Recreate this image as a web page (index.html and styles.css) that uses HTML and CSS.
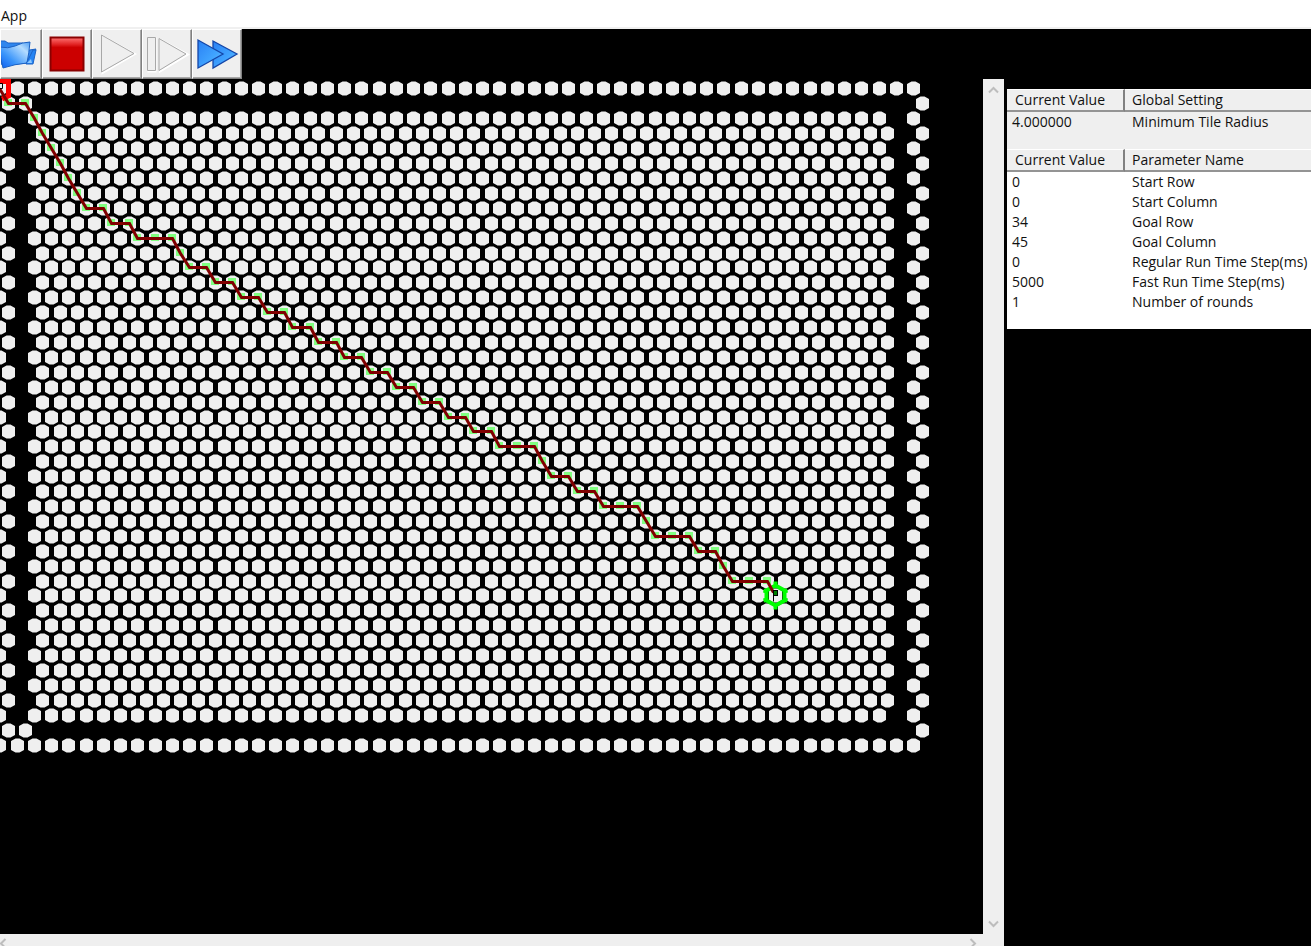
FILE: index.html
```html
<!DOCTYPE html>
<html lang="en">
<head>
<meta charset="utf-8">
<title>App</title>
<link rel="stylesheet" href="styles.css">
</head>
<body>
<div class="window">
  <nav class="menubar"><button class="menu-item" type="button">App</button></nav>
  <div class="toolbar" role="toolbar">
    <button class="tool tool-open" type="button" aria-label="Open">
      <svg width="49" height="48" viewBox="0 0 49 48">
        <defs>
          <linearGradient id="folder" x1="0" y1="1" x2="1" y2="0"><stop offset="0" stop-color="#0a5cf0"/><stop offset=".35" stop-color="#3c96fa"/><stop offset=".75" stop-color="#b4dcff"/><stop offset="1" stop-color="#4a9cf5"/></linearGradient>
        </defs>
        <path d="M4 13 7 11h5l3 2h15v8l13-2-7 14-27 2z" fill="#2f86ee" stroke="#1c62c4"/>
        <path d="M7 17q8 2 15-1 8-4 15-4-1 11-3 21-12 1-24 5-3-9-3-21z" fill="url(#folder)" stroke="#1c62c4"/>
        <path d="M33 34 40 20h3l-3 14z" fill="#2484f4" stroke="#1c62c4"/>
        <path d="m34 33 4-4 1 4z" fill="#8cc8ff"/>
      </svg>
    </button>
    <button class="tool" type="button" aria-label="Stop">
      <svg width="49" height="48" viewBox="0 0 49 48">
        <defs><linearGradient id="stop" x1="0" y1="0" x2="0" y2="1"><stop offset="0" stop-color="#ff7474"/><stop offset=".22" stop-color="#e02020"/><stop offset=".3" stop-color="#cc0000"/><stop offset="1" stop-color="#cc0000"/></linearGradient></defs>
        <rect x="7.500" y="7.500" width="33" height="33" fill="url(#stop)" stroke="#8a0000" stroke-width="2"/>
      </svg>
    </button>
    <button class="tool" type="button" aria-label="Run">
      <svg width="49" height="48" viewBox="0 0 49 48"><path d="M9.500 6v37L42 24z" fill="none" stroke="#fff" stroke-width="2"/><path d="M8.500 5v37L41 23.500z" fill="#efefef" stroke="#a8a8a8"/></svg>
    </button>
    <button class="tool" type="button" aria-label="Step">
      <svg width="49" height="48" viewBox="0 0 49 48"><path d="M12.500 8.500h-7v33h7zM17 9.500v32L45 24.500z" fill="none" stroke="#fff" stroke-width="2"/><path d="M12.500 7.500h-8v33h8zM16 8.500v32L43 24z" fill="#efefef" stroke="#a8a8a8"/></svg>
    </button>
    <button class="tool" type="button" aria-label="Fast run">
      <svg width="49" height="48" viewBox="0 0 49 48">
        <defs><linearGradient id="fast" x1="0" y1="0" x2="1" y2="1"><stop offset="0" stop-color="#2a80f4"/><stop offset=".6" stop-color="#40a4ff"/><stop offset="1" stop-color="#70c4ff"/></linearGradient></defs>
        <g fill="url(#fast)" stroke="#1446a8" stroke-width="1.300"><path d="M20 11v27l24-14z"/><path d="M5 10v28l25-14z"/></g>
      </svg>
    </button>
  </div>
  <main class="workspace">
    <section class="viewport">
      <svg class="board" id="board" width="983" height="855" role="img" aria-label="Tile map with search path"></svg>
      <div class="bar bar-v">
        <button class="arrow" type="button" aria-label="Scroll up"><svg width="11" height="8" viewBox="0 0 11 8"><path d="m1 6.500 4.500-4.500L10 6.500"/></svg></button>
        <button class="arrow" type="button" aria-label="Scroll down"><svg width="11" height="8" viewBox="0 0 11 8"><path d="M1 1.500 5.500 6 10 1.500"/></svg></button>
      </div>
      <div class="bar bar-h">
        <button class="arrow" type="button" aria-label="Scroll left"><svg width="8" height="11" viewBox="0 0 8 11"><path d="M5.500 1 1 5.500 5.500 10"/></svg></button>
        <button class="arrow" type="button" aria-label="Scroll right"><svg width="8" height="11" viewBox="0 0 8 11"><path d="M1.500 1 6 5.500 1.500 10"/></svg></button>
      </div>
    </section>
    <aside class="panel">
      <table class="grid grid-global">
        <thead><tr><th>Current Value</th><th>Global Setting</th></tr></thead>
        <tbody><tr><td>4.000000</td><td>Minimum Tile Radius</td></tr></tbody>
      </table>
      <table class="grid grid-params">
        <thead><tr><th>Current Value</th><th>Parameter Name</th></tr></thead>
        <tbody>
          <tr><td>0</td><td>Start Row</td></tr>
          <tr><td>0</td><td>Start Column</td></tr>
          <tr><td>34</td><td>Goal Row</td></tr>
          <tr><td>45</td><td>Goal Column</td></tr>
          <tr><td>0</td><td>Regular Run Time Step(ms)</td></tr>
          <tr><td>5000</td><td>Fast Run Time Step(ms)</td></tr>
          <tr><td>1</td><td>Number of rounds</td></tr>
        </tbody>
      </table>
    </aside>
  </main>
</div>
<script src="board.js"></script>
</body>
</html>
```
FILE: styles.css
```css
* { box-sizing: border-box; }
body { margin: 0; background: #000; color: #111; font: 14px/20px "Open Sans", "Noto Sans", sans-serif; }
button { font: inherit; color: inherit; margin: 0; padding: 0; border: 0; background: none; }
.window { display: flex; flex-direction: column; height: 100vh; overflow: hidden; }
.menubar { flex: none; height: 29px; background: #fff; border-bottom: 2px solid #f0f0f0; padding: 6px 1px 0; }
.menu-item { display: block; }
.toolbar { flex: none; display: flex; height: 50px; }
.tool { width: 50px; background: #efefef; border: 1px solid; border-color: #fff #808080 #808080 #fff; box-shadow: inset -1px -1px #a8a8a8; overflow: hidden; }
.tool svg { display: block; }
.tool-open { width: 42px; }
.tool-open svg { margin-left: -8px; }
.workspace { flex: 1; min-height: 0; display: grid; grid-template-columns: minmax(0, 1fr) 304px; gap: 3px; }
.viewport { display: grid; grid-template-columns: minmax(0, 1fr) 21px; grid-template-rows: minmax(0, 1fr) 12px; min-height: 0; background: #efefef; }
.board { width: 100%; height: 100%; background: #000; display: block; }
.bar { display: flex; justify-content: space-between; overflow: hidden; }
.bar-v { flex-direction: column; padding: 7px 0 6px; align-items: center; }
.bar-h { grid-column: 1; padding: 4px 6px 0 0; align-items: flex-start; }
.arrow svg { display: block; fill: none; stroke: #bdbdbd; stroke-width: 2; }
.tile { fill: #efefef; }
.visited { fill: #80ff80; }
.route { fill: none; stroke: #800000; stroke-width: 3; }
.start { fill: none; stroke: #f00; stroke-width: 5; }
.goal { fill: none; stroke: #0f0; stroke-width: 4; }
.marker { fill: none; stroke: #000; stroke-width: 1; }
.marker-box { fill: #008000; stroke: #000; stroke-width: 1; }
.panel { padding-top: 10px; }
.grid { width: 100%; border-collapse: separate; border-spacing: 0; table-layout: fixed; white-space: nowrap; }
.grid th { height: 23px; padding: 0 8px; line-height: 20px; text-align: left; font-weight: 400; background: #efefef; border-top: 1px solid #fff; border-bottom: 2px solid #949494; }
.grid th:first-child { width: 118px; border-right: 2px solid #808080; }
.grid td { height: 20px; padding: 0 5px; }
.grid td:last-child { padding-left: 7px; }
.grid th:last-child { padding-left: 7px; }
.grid-global { background: #efefef; border-bottom: 17px solid #efefef; }
.grid-params { background: #fff; border-bottom: 17px solid #fff; }
```
FILE: board.js
```js
const NS = "http://www.w3.org/2000/svg";
const board = document.getElementById("board");
const PITCH = 17.24, ROW = 14.91, TOP = 9.49;
const COLS = 54, ROWS = 45;

// Centers sit on half pixels so that tile edges and the route stay crisp.
const center = (row, col) => [
  Math.floor(col * PITCH + (row % 2) * PITCH / 2 - 0.1) + 0.5,
  Math.round(TOP + row * ROW) + 0.5
];

function add(name, attrs) {
  const el = document.createElementNS(NS, name);
  for (const key in attrs) el.setAttribute(key, attrs[key]);
  board.append(el);
}

function hex(x, y, w, h) {
  return `M${x} ${y - h}L${x + w} ${y - h / 2}V${y + h / 2}L${x} ${y + h}L${x - w} ${y + h / 2}V${y - h / 2}Z`;
}

// Tile with blunted top and bottom corners.
function tile(x, y) {
  return `M${x - 2} ${y - 7}h4l4.5 2.500v9l-4.500 2.500h-4l-4.500-2.500v-9Z`;
}

function isOpen(row, col) {
  if (row === 0 || row === ROWS - 1 || col === 0 || col === COLS - 1) return true;
  if (row === 1 || row === ROWS - 2) return col === 1;
  return col >= 2 && col <= 51;
}

let tiles = "";
for (let row = 0; row < ROWS; row++)
  for (let col = 0; col < COLS; col++)
    if (isOpen(row, col)) tiles += tile(...center(row, col));
add("path", { class: "tile", d: tiles });

// R moves one tile right, D moves to the lower-right neighbour.
const moves = "DR" + "D".repeat(7) + "RDRDRRDD" + "RD".repeat(12) + "RRDDRDRDRRDDRRDRDDRRD";
let row = 0, col = 0;
const route = [center(0, 0)];
for (const move of moves) {
  if (move === "R") col++;
  else { if (row % 2) col++; row++; }
  route.push(center(row, col));
}
for (const [x, y] of route.slice(1, -1)) add("rect", { class: "visited", x: x - 4.5, y: y - 4.5, width: 8, height: 7 });

const [gx, gy] = route[route.length - 1];
add("path", { class: "start", d: "M-8 2.500H8.500V17L2 20" });
add("path", { class: "goal", d: hex(gx, gy, 9, 10) });
add("path", { class: "goal", d: `M${gx} ${gy - 14}v5M${gx} ${gy + 9}v5M${gx - 12} ${gy - 5}l4 1M${gx + 12} ${gy - 5}l-4 1M${gx - 12} ${gy + 5}l4-1M${gx + 12} ${gy + 5}l-4-1` });
add("polyline", { class: "route", points: route.slice(0, -1).join(" ") + ` ${gx - 2},${gy - 3}` });
add("path", { class: "marker", d: `M${gx - 2} ${gy}v6` });
add("rect", { class: "marker-box", x: gx - 2, y: gy - 5, width: 4, height: 5 });
add("path", { class: "marker", d: "M-2 4.500H2.500V9.500H-2" });
```
